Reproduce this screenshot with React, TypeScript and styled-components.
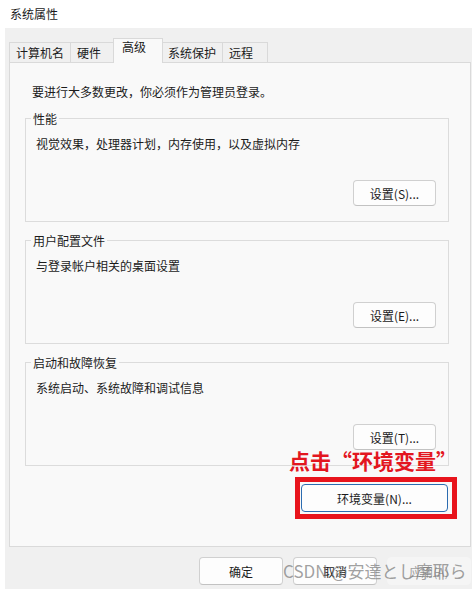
import styled, { createGlobalStyle } from 'styled-components';

const GlobalStyle = createGlobalStyle`
    html, body {
        margin: 0;
        padding: 0;
        background: #ffffff;
    }
    body {
        font-family: "Noto Sans CJK SC", "Noto Sans", sans-serif;
        font-size: 12px;
        color: #1b1b1b;
    }
`;

const tabs = ['计算机名', '硬件', '高级', '系统保护', '远程'];
const activeTab = 2;

const groups = [
    { title: '性能', desc: '视觉效果，处理器计划，内存使用，以及虚拟内存', button: '设置(S)...' },
    { title: '用户配置文件', desc: '与登录帐户相关的桌面设置', button: '设置(E)...' },
    { title: '启动和故障恢复', desc: '系统启动、系统故障和调试信息', button: '设置(T)...' },
];

const App = () => {
    return (
        <Window>
            <GlobalStyle />
            <TitleBar>系统属性</TitleBar>
            <Body>
                <TabRow>
                    {tabs.map((t, i) => (
                        <Tab key={t} $active={i === activeTab}>
                            {t}
                        </Tab>
                    ))}
                </TabRow>
                <Panel>
                    <Intro>要进行大多数更改，你必须作为管理员登录。</Intro>
                    {groups.map((g) => (
                        <Group key={g.title}>
                            <Legend>{g.title}</Legend>
                            <GroupDesc>{g.desc}</GroupDesc>
                            <SettingsButton>{g.button}</SettingsButton>
                        </Group>
                    ))}
                    <Highlight>
                        <Annotation>点击“环境变量”</Annotation>
                        <EnvButton>环境变量(N)...</EnvButton>
                    </Highlight>
                </Panel>
                <ButtonRow>
                    <DialogButton>确定</DialogButton>
                    <DialogButton>取消</DialogButton>
                    <DialogButton $disabled>应用(A)</DialogButton>
                </ButtonRow>
            </Body>
            <Watermark>CSDN @安達とし摩耶ら</Watermark>
        </Window>
    );
};

const Window = styled.div`
    position: relative;
    width: 475px;
    height: 589px;
    display: flex;
    flex-direction: column;
    background: #ffffff;
    overflow: hidden;
`;

const TitleBar = styled.div`
    height: 28px;
    display: flex;
    align-items: center;
    padding-left: 10px;
    line-height: 16px;
`;

const Body = styled.div`
    flex: 1;
    margin: 0 3px 0 5px;
    background: #f0f0f0;
    display: flex;
    flex-direction: column;
`;

const TabRow = styled.div`
    display: flex;
    align-items: flex-end;
    height: 35px;
    margin-bottom: -1px;
    padding-left: 4px;
`;

const Tab = styled.div<{ $active?: boolean }>`
    box-sizing: border-box;
    min-width: ${(p) => (p.$active ? 50 : 46)}px;
    height: ${(p) => (p.$active ? 25 : 21)}px;
    line-height: ${(p) => (p.$active ? 16 : 20)}px;
    padding: 0 ${(p) => (p.$active ? 8 : 6)}px;
    margin: 0 ${(p) => (p.$active ? -2 : -1)}px 0 ${(p) => (p.$active ? -2 : 0)}px;
    border: 1px solid #d9d9d9;
    border-bottom: none;
    background: ${(p) => (p.$active ? '#f9f9f9' : '#f0f0f0')};
    position: relative;
    z-index: ${(p) => (p.$active ? 2 : 0)};
    white-space: nowrap;
`;

const Panel = styled.div`
    position: relative;
    z-index: 1;
    box-sizing: border-box;
    height: 485px;
    margin: 0 1px 0 4px;
    border: 1px solid #dadada;
    background: #f9f9f9;
    padding: 21px 21px 0 15px;
    display: flex;
    flex-direction: column;
`;

const Intro = styled.div`
    line-height: 16px;
    padding-left: 7px;
`;

const Group = styled.div`
    margin-top: 18px;
    &:first-of-type {
        margin-top: 19px;
    }
    border: 1px solid #dcdcdc;
    padding: 0 12px 15px 10px;
    display: flex;
    flex-direction: column;
`;

const Legend = styled.div`
    align-self: flex-start;
    margin: -8px 0 0 -5px;
    padding: 0 2px;
    line-height: 16px;
    background: #f9f9f9;
`;

const GroupDesc = styled.div`
    margin-top: 9px;
    line-height: 16px;
`;

const SettingsButton = styled.button`
    align-self: flex-end;
    margin-top: 28px;
    width: 83px;
    height: 26px;
    box-sizing: border-box;
    border: 1px solid #d0d0d0;
    border-bottom-color: #c2c2c2;
    border-radius: 4px;
    background: #fdfdfd;
    font: inherit;
    color: #1b1b1b;
    padding: 0;
`;

const Highlight = styled.div`
    position: relative;
    align-self: flex-end;
    margin: 11px -8px 0 0;
    border: 5px solid #e8141c;
    padding: 2px 4px 2px 1px;
    display: flex;
`;

const Annotation = styled.div`
    position: absolute;
    right: -5px;
    bottom: calc(100% + 10px);
    white-space: nowrap;
    font-size: 21px;
    line-height: 23px;
    font-weight: 700;
    color: #e3161f;
`;

const EnvButton = styled(SettingsButton)`
    margin: 0;
    width: 147px;
    height: 28px;
    border: 1px solid #2c6cb0;
`;

const ButtonRow = styled.div`
    display: flex;
    justify-content: flex-end;
    gap: 10px;
    padding: 10px 1px 0 0;
`;

const DialogButton = styled.button<{ $disabled?: boolean }>`
    width: 84px;
    height: 28px;
    box-sizing: border-box;
    border: 1px solid ${(p) => (p.$disabled ? '#f5f5f5' : '#d0d0d0')};
    border-bottom-color: ${(p) => (p.$disabled ? '#f5f5f5' : '#c2c2c2')};
    border-radius: 4px;
    background: ${(p) => (p.$disabled ? '#f5f5f5' : '#fdfdfd')};
    color: ${(p) => (p.$disabled ? '#a0a0a0' : '#1b1b1b')};
    font: inherit;
    padding: 0;
`;

const Watermark = styled.div`
    position: absolute;
    left: 283px;
    top: 561px;
    font-family: "Noto Sans CJK JP", "Noto Sans", sans-serif;
    font-size: 17px;
    line-height: 20px;
    color: rgba(120, 120, 120, 0.7);
    white-space: nowrap;
    pointer-events: none;
`;

export default App;
